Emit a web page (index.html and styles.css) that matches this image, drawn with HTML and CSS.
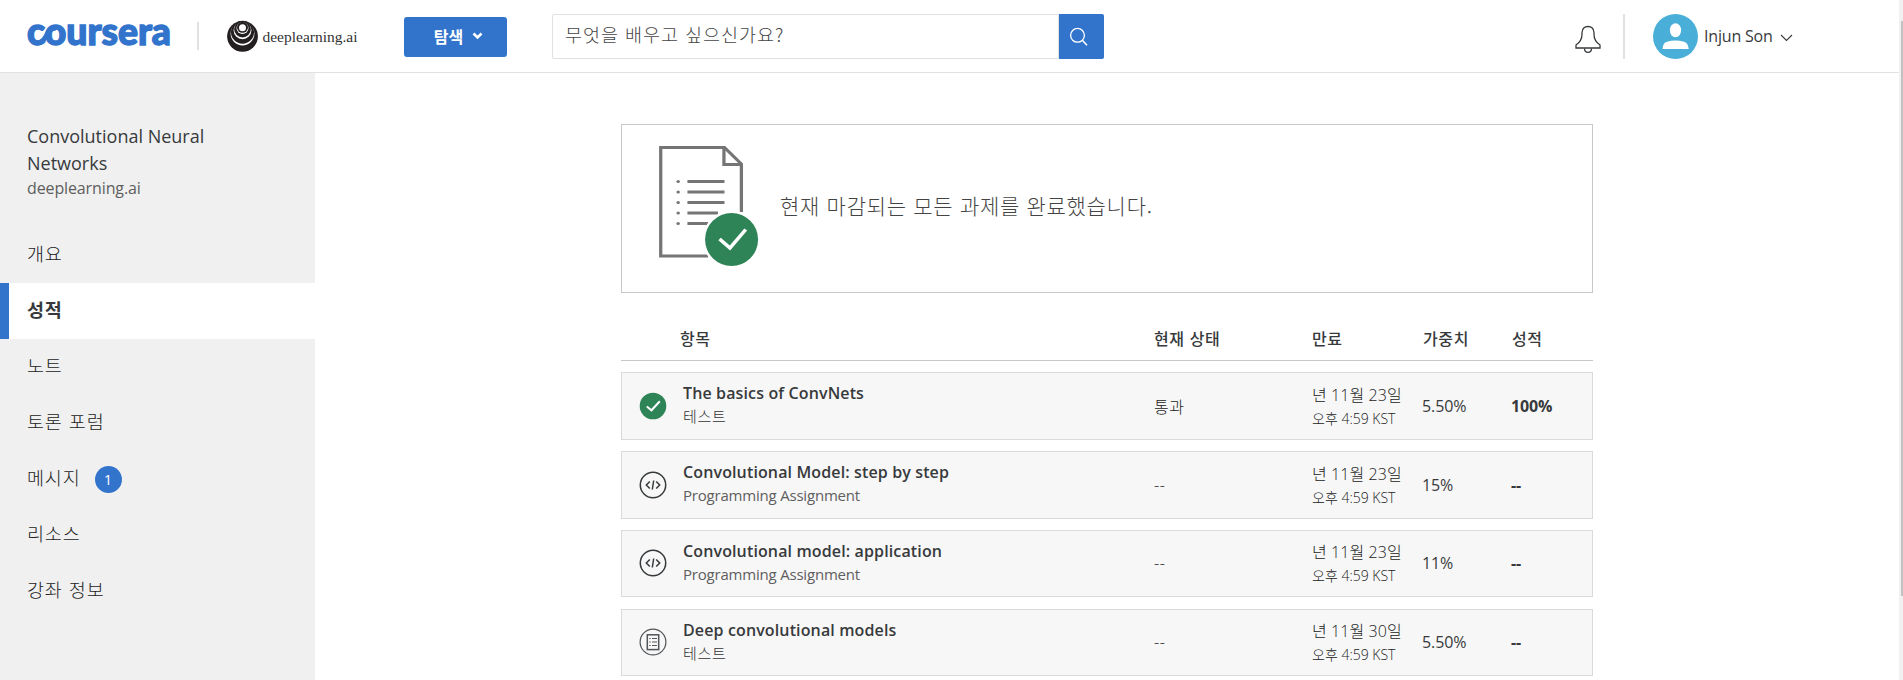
FILE: index.html
```html
<!DOCTYPE html>
<html lang="ko">
<head>
<meta charset="utf-8">
<title>Coursera</title>
<link rel="stylesheet" href="styles.css">
</head>
<body>
<header class="topbar">
  <a class="brand" aria-label="Coursera">
    <svg width="150" height="64" viewBox="0 0 150 64">
      <text class="brand-word" x="2" y="44.500" textLength="144" lengthAdjust="spacingAndGlyphs">coursera</text>
      <path class="brand-loop" d="M11 43 Q17 43.500 20.500 37 Q24 28 31 28"/>
    </svg>
  </a>
  <span class="brand-rule"></span>
  <a class="partner">
    <svg width="136" height="34" viewBox="0 0 136 34">
      <circle cx="16.500" cy="17.300" r="15.400" fill="#231f20"/>
      <circle cx="16.500" cy="14.600" r="11.900" fill="#fff"/>
      <circle cx="16.500" cy="13.200" r="11.500" fill="#231f20"/>
      <circle cx="16.500" cy="11.300" r="8.900" fill="#fff"/>
      <circle cx="16.500" cy="10.200" r="8.300" fill="#231f20"/>
      <circle cx="16.500" cy="8.900" r="6" fill="#fff"/>
      <circle cx="16.500" cy="8.300" r="5.500" fill="#231f20"/>
      <circle cx="16.500" cy="8.700" r="3.500" fill="#fff"/>
      <text class="partner-word" x="36.500" y="22.500" textLength="95" lengthAdjust="spacingAndGlyphs">deeplearning.ai</text>
    </svg>
  </a>
  <button class="explore">탐색
    <svg width="11" height="8" viewBox="0 0 11 8"><path d="M1.500 1.500 L5.500 5.500 L9.500 1.500" fill="none" stroke="#fff" stroke-width="2.600"/></svg>
  </button>
  <div class="search">
    <span class="search-input">무엇을 배우고 싶으신가요?</span>
    <span class="search-btn">
      <svg width="20" height="20" viewBox="0 0 20 20" fill="none" stroke="#fff"><circle cx="8.500" cy="8.300" r="6.900" stroke-width="1.300"/><path d="M13.300 13.300 L18 18.300" stroke-width="1.600"/></svg>
    </span>
  </div>
  <svg class="bell" width="28" height="30" viewBox="0 0 28 30" fill="none" stroke="#373a3c" stroke-width="1.300"><path d="M2 24 V21 Q8 17 8 10.500 V8.500 Q8.500 2.500 14 2.500 Q19.500 2.500 20 8.500 V10.500 Q20 17 26 21 V24 Z"/><path d="M10.500 24.500 Q10.500 28.300 14 28.300 Q17.500 28.300 17.500 24.500"/></svg>
  <span class="user-rule"></span>
  <div class="user">
    <svg width="45" height="45" viewBox="0 0 45 45"><circle cx="22.500" cy="22.500" r="22.500" fill="#49afd9"/><ellipse cx="22.500" cy="16.300" rx="5.600" ry="7" fill="#fff"/><path d="M9.500 35 Q10 28.500 14 27.700 Q22.500 25.500 31 27.700 Q35 28.500 35.700 35 Z" fill="#fff"/></svg>
    <span class="user-name">Injun Son</span>
    <svg class="caret" width="13" height="8" viewBox="0 0 13 8"><path d="M1 1 L6.500 6.500 L12 1" fill="none" stroke="#373a3c" stroke-width="1.100"/></svg>
  </div>
</header>
<div class="page">
  <aside class="sidebar">
    <div class="course">
      <div class="course-title">Convolutional Neural<br>Networks</div>
      <div class="course-partner">deeplearning.ai</div>
    </div>
    <nav class="nav">
      <a class="nav-item">개요</a>
      <a class="nav-item active">성적</a>
      <a class="nav-item">노트</a>
      <a class="nav-item">토론 포럼</a>
      <a class="nav-item">메시지<span class="badge">1</span></a>
      <a class="nav-item">리소스</a>
      <a class="nav-item">강좌 정보</a>
    </nav>
  </aside>
  <main class="content">
    <section class="notice">
      <svg width="109" height="126" viewBox="0 0 100 126" preserveAspectRatio="none">
        <g fill="none" stroke="#757575" stroke-width="3">
          <path d="M46 113 H2.500 V4.500 H61 L76.500 21 V69"/>
          <path d="M60.500 4.500 V21.500 H76.500"/>
          <path d="M27 38.500 H61 M27 49 H61 M27 59.500 H61 M27 70 H55 M27 80.500 H46"/>
        </g>
        <g fill="#757575"><circle cx="18.500" cy="38.500" r="1.600"/><circle cx="18.500" cy="49" r="1.600"/><circle cx="18.500" cy="59.500" r="1.600"/><circle cx="18.500" cy="70" r="1.600"/><circle cx="18.500" cy="80.500" r="1.600"/></g>
        <ellipse cx="67.500" cy="96.500" rx="26.500" ry="29" fill="#fff"/>
        <ellipse cx="67.500" cy="96.500" rx="24.300" ry="26.500" fill="#2f8457"/>
        <path d="M56.500 96 L66 105 L80.500 86.500" fill="none" stroke="#fff" stroke-width="3.300"/>
      </svg>
      <p class="notice-text">현재 마감되는 모든 과제를 완료했습니다.</p>
    </section>
    <div class="head">
      <span></span><span>항목</span><span>현재 상태</span><span>만료</span><span>가중치</span><span>성적</span>
    </div>
    <div class="row">
      <svg class="icon" width="28" height="28" viewBox="0 0 28 28"><circle cx="14" cy="14" r="13.300" fill="#2f8457"/><path d="M7.800 14.500 L12.500 18.300 L20.800 9.300" fill="none" stroke="#fff" stroke-width="2"/></svg>
      <div class="item"><b>The basics of ConvNets</b><small class="ko">테스트</small></div>
      <span class="status">통과</span>
      <div class="due"><span>년 11월 23일</span><small>오후 4:59 KST</small></div>
      <span class="weight">5.50%</span><b class="grade">100%</b>
    </div>
    <div class="row">
      <svg class="icon" width="28" height="28" viewBox="0 0 28 28" fill="none" stroke="#373a3c" stroke-width="1.500"><circle cx="14" cy="14" r="12.700"/><path d="M10.800 10.500 L7.300 14 L10.800 17.500 M17.200 10.500 L20.700 14 L17.200 17.500 M14.700 9.500 L13.300 18.500"/></svg>
      <div class="item"><b>Convolutional Model: step by step</b><small>Programming Assignment</small></div>
      <span class="status">--</span>
      <div class="due"><span>년 11월 23일</span><small>오후 4:59 KST</small></div>
      <span class="weight">15%</span><b class="grade">--</b>
    </div>
    <div class="row short">
      <svg class="icon" width="28" height="28" viewBox="0 0 28 28" fill="none" stroke="#373a3c" stroke-width="1.500"><circle cx="14" cy="14" r="12.700"/><path d="M10.800 10.500 L7.300 14 L10.800 17.500 M17.200 10.500 L20.700 14 L17.200 17.500 M14.700 9.500 L13.300 18.500"/></svg>
      <div class="item"><b>Convolutional model: application</b><small>Programming Assignment</small></div>
      <span class="status">--</span>
      <div class="due"><span>년 11월 23일</span><small>오후 4:59 KST</small></div>
      <span class="weight">11%</span><b class="grade">--</b>
    </div>
    <div class="row short">
      <svg class="icon" width="28" height="28" viewBox="0 0 28 28" fill="none" stroke="#525558" stroke-width="1.200"><circle cx="14" cy="14" r="12.900"/><rect x="8.300" y="6.800" width="11.400" height="14.800" stroke-width="1.500"/><path d="M13 10.500 H18 M13 14 H18 M13 17.500 H18 M10.300 10.500 H11.700 M10.300 14 H11.700 M10.300 17.500 H11.700"/></svg>
      <div class="item"><b>Deep convolutional models</b><small class="ko">테스트</small></div>
      <span class="status">--</span>
      <div class="due"><span>년 11월 30일</span><small>오후 4:59 KST</small></div>
      <span class="weight">5.50%</span><b class="grade">--</b>
    </div>
  </main>
</div>
<div class="scroll"><div class="thumb"></div></div>
</body>
</html>
```
FILE: styles.css
```css
* { box-sizing: border-box; }
html { overflow: hidden; }
body {
  margin: 0;
  height: 680px;
  overflow: hidden;
  background: #fff;
  color: #373a3c;
  font-family: "Open Sans", "Noto Sans CJK KR", sans-serif;
}
.topbar {
  display: flex;
  align-items: flex-start;
  height: 73px;
  border-bottom: 1px solid #e1e1e1;
}
.topbar > * { flex-shrink: 0; }
.brand { width: 150px; height: 64px; margin: 0 0 0 25px; }
.brand-word { font: 900 38px Lato, sans-serif; fill: #3274cc; stroke: #3274cc; stroke-width: 1.400; }
.brand-loop { fill: none; stroke: #3274cc; stroke-width: 4.800; }
.brand-rule { width: 2px; height: 28px; margin: 22px 0 0 22px; background: #e1e1e1; }
.partner { width: 136px; height: 34px; margin: 19px 0 0 27px; }
.partner-word { font: 14.500px "Liberation Serif", serif; fill: #333; }
.explore {
  display: flex;
  align-items: center;
  justify-content: center;
  gap: 9px;
  width: 103px;
  height: 40px;
  margin: 17px 0 0 42px;
  padding: 0 0 2px 6px;
  border: 0;
  border-radius: 3px;
  background: #3274cc;
  color: #fff;
  font: 700 16px/20px "Noto Sans CJK KR", sans-serif;
}
.search { display: flex; width: 552px; height: 45px; margin: 14px 0 0 45px; }
.search-input {
  flex: 1;
  padding-left: 12px;
  border: 1px solid #e1e1e1;
  border-radius: 2px 0 0 2px;
  color: #444;
  font: 300 18.500px/39px "Noto Sans CJK KR", sans-serif;
  letter-spacing: .950px;
}
.search-btn { width: 45px; padding: 13px 0 0 10px; border-radius: 0 2px 2px 0; background: #3274cc; }
.search-btn svg { display: block; }
.bell { margin: 24px 0 0 470px; }
.user-rule { width: 2px; height: 45px; margin: 14px 0 0 21px; background: #e1e1e1; }
.user { display: flex; align-items: center; height: 45px; margin: 14px 0 0 28px; }
.user-name { width: 76px; margin-top: -1px; padding-left: 6px; font-size: 16px; line-height: 20px; letter-spacing: -.180px; white-space: nowrap; }
.caret { margin: 3px 0 0 6px; }
.page { display: flex; height: 607px; overflow: hidden; }
.sidebar { width: 315px; background: #f0f0f0; }
.course { height: 154px; padding: 50px 27px 0; }
.course-title { font-size: 18px; line-height: 27px; }
.course-partner { margin-top: -1px; font-size: 16px; line-height: 24px; letter-spacing: -.120px; color: #5e5e5e; }
.nav-item {
  display: flex;
  align-items: center;
  height: 56.100px;
  padding: 0 0 5px 27px;
  color: #222;
  font: 300 18.500px/24px "Noto Sans CJK KR", sans-serif;
  letter-spacing: .850px;
}
.active { padding-left: 18px; border-left: 9px solid #3274cc; background: #fff; font-weight: 700; color: #373a3c; }
.badge {
  width: 27px;
  height: 27px;
  margin: 6px 0 0 14px;
  border-radius: 50%;
  background: #3274cc;
  color: #fff;
  font: 14px/27px "Open Sans", sans-serif;
  letter-spacing: 0;
  text-align: center;
}
.content { width: 972px; margin-left: 306px; padding-top: 51px; }
.notice { display: flex; height: 169px; padding: 18px 0 0 36px; border: 1px solid #c8c8c8; }
.notice-text { margin: 47px 0 0 13px; color: #444; font: 300 21px/30px "Noto Sans CJK KR", sans-serif; letter-spacing: .700px; }
.head, .row { display: grid; align-items: center; }
.head {
  grid-template-columns: 59px 474px 158px 111px 89px 1fr;
  height: 68px;
  margin-bottom: 11px;
  padding: 23px 0 0;
  border-bottom: 1px solid #c8c8c8;
  font: 500 16px/24px "Noto Sans CJK KR", sans-serif;
  letter-spacing: .600px;
}
.row {
  grid-template-columns: 61px 471px 158px 110px 89px 1fr;
  height: 68px;
  margin-bottom: 11px;
  border: 1px solid #dadada;
  background: #f7f7f7;
}
.row.short { height: 67px; margin-bottom: 12px; }
.icon { margin: -1px 0 0 17px; }
.item, .due { display: flex; flex-direction: column; }
.item { margin-top: -3px; }
.item b { font-weight: 600; font-size: 16px; line-height: 24px; letter-spacing: .130px; }
.item small { font-size: 15px; line-height: 23px; letter-spacing: -.200px; color: #5e5e5e; }
.item .ko { font-weight: 300; letter-spacing: .700px; color: #333; }
.status { font-weight: 300; font-size: 16px; letter-spacing: .600px; color: #222; }
.status, .weight, .grade { margin-top: -1px; }
.due { font-weight: 300; font-size: 16px; line-height: 24px; letter-spacing: .080px; color: #222; }
.due small { font-size: 14px; line-height: 23px; letter-spacing: 0; }
.weight { font-size: 16px; letter-spacing: -.100px; }
.grade { font-size: 16px; font-weight: 700; letter-spacing: -.150px; }
.scroll { position: absolute; right: 0; top: 0; width: 4px; height: 680px; background: #f1f1f1; }
.thumb { width: 2px; height: 575px; margin: 21px 0 0 2px; background: #c1c1c1; }
```
